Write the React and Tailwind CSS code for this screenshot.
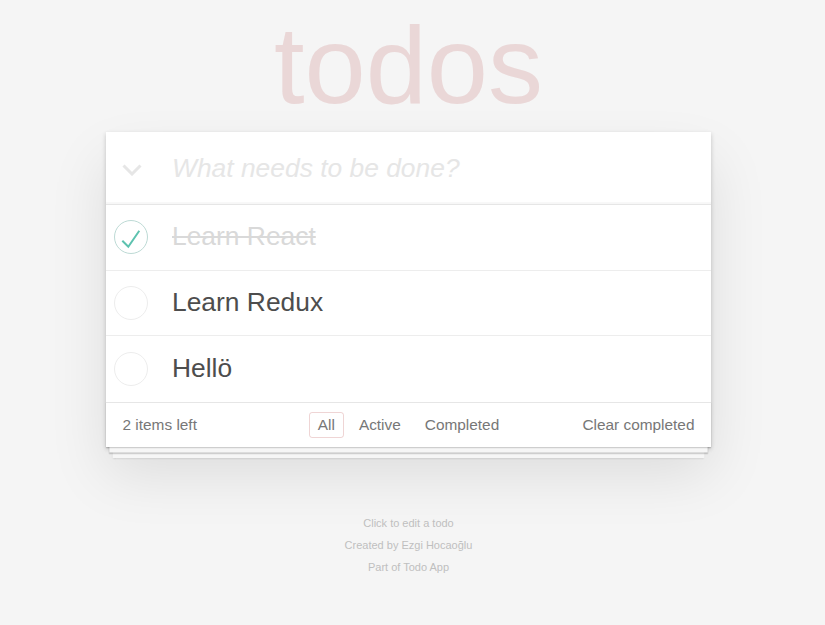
import { useState } from "react";

const FONT = { fontFamily: '"Liberation Sans", Arial, Helvetica, sans-serif' };

function Toggle({ done }) {
  return (
    <svg width="36" height="36" viewBox="0 0 36 36" className="ml-[7px] shrink-0">
      <circle cx="18" cy="18" r="16.5" fill="none" stroke={done ? "#bddad5" : "#ededed"} strokeWidth="1" />
      {done && (
        <polyline
          points="9.3,21.7 15.3,27.7 26.3,11.7"
          fill="none"
          stroke="#5dc2af"
          strokeWidth="2"
        />
      )}
    </svg>
  );
}

function TodoItem({ title, done }) {
  return (
    <li className="flex h-[65.5px] items-center border-b border-[#ededed] last:border-b-0">
      <Toggle done={done} />
      <label
        className={
          "pl-[23px] text-[26.4px] leading-[31.7px] " +
          (done ? "text-[#d9d9d9] line-through" : "text-[#4d4d4d]")
        }
      >
        {title}
      </label>
    </li>
  );
}

export default function App() {
  const [filter, setFilter] = useState("All");
  const todos = [
    { title: "Learn React", done: true },
    { title: "Learn Redux", done: false },
    { title: "Hellö", done: false },
  ];

  return (
    <div className="min-h-[625px] bg-[#f5f5f5] pt-[10px]" style={FONT}>
      <div className="ml-[106px] w-[605px]">
        <h1 className="mb-[12px] h-[110px] text-center text-[110px] font-thin leading-[110px] text-[#ead7d7]">
          todos
        </h1>

        <section className="bg-white shadow-[0_2.2px_4.4px_0_rgba(0,0,0,0.2),0_27.5px_55px_0_rgba(0,0,0,0.1)]">
          <header className="flex h-[72px] items-center shadow-[inset_0_-2px_1px_rgba(0,0,0,0.03)]">
            <svg width="20" height="12" viewBox="0 0 20 12" className="ml-[15.5px] mt-[3px] shrink-0">
              <polyline points="1.5,1.5 10,10 18.5,1.5" fill="none" stroke="#e6e6e6" strokeWidth="3" />
            </svg>
            <input
              className="h-full min-w-0 flex-1 bg-transparent pl-[30.5px] pr-[16px] text-left text-[26.4px] text-[#4d4d4d] outline-none placeholder:font-light placeholder:italic placeholder:text-[#e6e6e6]"
              placeholder="What needs to be done?"
            />
          </header>

          <ul className="border-t border-[#e6e6e6]">
            {todos.map((t) => (
              <TodoItem key={t.title} {...t} />
            ))}
          </ul>

          <footer className="grid h-[45px] grid-cols-[1fr_auto_1fr] items-center border-t border-[#e6e6e6] px-[16.5px] text-[15.4px] text-[#777] shadow-[0_1.1px_1.1px_rgba(0,0,0,0.2),0_8.8px_0_-3.3px_#f6f6f6,0_9.9px_1.1px_-3.3px_rgba(0,0,0,0.2),0_17.6px_0_-6.6px_#f6f6f6,0_18.7px_2.2px_-6.6px_rgba(0,0,0,0.2)]">
            <span>2 items left</span>
            <ul className="flex">
              {["All", "Active", "Completed"].map((f) => (
                <li key={f}>
                  <button
                    onClick={() => setFilter(f)}
                    className={
                      "mx-[3.3px] h-[26px] rounded-[3px] border px-[7.7px] leading-[24px] " +
                      (filter === f ? "border-[rgba(175,47,47,0.2)]" : "border-transparent")
                    }
                  >
                    {f}
                  </button>
                </li>
              ))}
            </ul>
            <button className="justify-self-end leading-[22px]">Clear completed</button>
          </footer>
        </section>

        <div className="mt-[71px] flex flex-col items-center gap-[11px] text-[11px] leading-[11px] text-[#bfbfbf]">
          <p>Click to edit a todo</p>
          <p>Created by Ezgi Hocaoğlu</p>
          <p>Part of Todo App</p>
        </div>
      </div>
    </div>
  );
}
